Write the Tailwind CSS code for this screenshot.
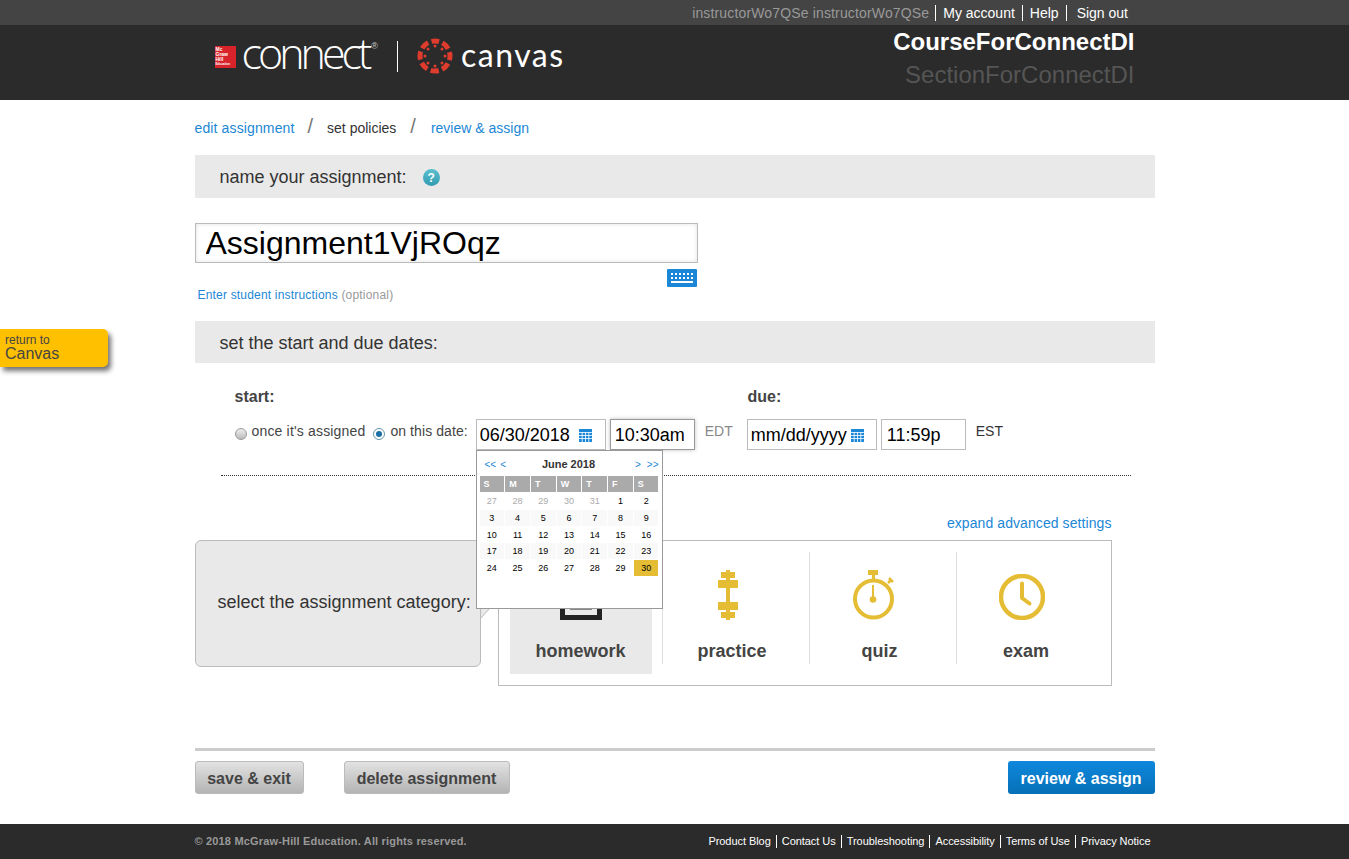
<!doctype html>
<html lang="en">
<head>
    <meta charset="UTF-8">
    <title>set policies</title>
    <script src="https://cdn.jsdelivr.net/npm/@tailwindcss/browser@4"></script>
</head>
<body class="relative h-[859px] overflow-hidden bg-white font-['Liberation_Sans',Arial,sans-serif] text-[#333]">

<!-- top bar -->
<div class="h-[25px] bg-[#444] flex justify-end items-center pr-[221px] text-[14px]">
    <span class="text-[#999] pr-[6px] border-r border-white leading-[16px] tracking-[0.15px]">instructorWo7QSe instructorWo7QSe</span>
    <a class="text-white px-[7px] border-r border-white leading-[16px]">My account</a>
    <a class="text-white px-[7px] border-r border-white leading-[16px]">Help</a>
    <a class="text-white pl-[10px] leading-[16px]">Sign out</a>
</div>

<!-- header -->
<div class="h-[75px] bg-[#2b2b2b]">
    <div class="w-[960px] mx-auto flex justify-between">
        <div class="flex items-center pl-[20px] h-[62px]">
            <div class="w-[21px] h-[22px] mt-[2px] bg-[#d8232a] text-white text-[5px] leading-[5px] font-bold pl-[1px] pt-[1px]">Mc<br>Graw<br>Hill<br><span class="block text-[3px] leading-[4px]">Education</span></div>
            <span class="ml-[6px] -mt-[7px] text-white text-[43px] leading-none font-['Open_Sans',sans-serif] font-light tracking-[-4px]">connect</span>
            <span class="text-[#ccc] text-[9px] self-start mt-[15px] ml-[3px]">®</span>
            <div class="w-px h-[31px] bg-white ml-[19px]"></div>
            <svg class="ml-[19px] w-[36px] h-[36px]" viewBox="0 0 36 36">
                <circle cx="18" cy="18" r="15" fill="none" stroke="#e03c2e" stroke-width="5" stroke-dasharray="8.2 3.58" stroke-dashoffset="4.1" transform="rotate(-90 18 18)"/>
                <g fill="#e03c2e">
                    <circle cx="18" cy="8" r="1.500"/><circle cx="18" cy="28" r="1.500"/><circle cx="8" cy="18" r="1.500"/><circle cx="28" cy="18" r="1.500"/>
                    <circle cx="11" cy="11" r="1.500"/><circle cx="25" cy="11" r="1.500"/><circle cx="11" cy="25" r="1.500"/><circle cx="25" cy="25" r="1.500"/>
                </g>
            </svg>
            <span class="ml-[8px] -mt-[3px] text-white text-[32px] leading-none font-['Lato',sans-serif] tracking-[1.500px]">canvas</span>
        </div>
        <div class="text-right pr-[20px] pt-[3px]">
            <div class="text-white text-[24px] font-bold leading-[27px]">CourseForConnectDI</div>
            <div class="text-[#555] text-[24px] leading-[27px] mt-[6px]">SectionForConnectDI</div>
        </div>
    </div>
</div>

<main class="w-[960px] mx-auto relative">
    <!-- steps -->
    <div class="h-[55px] flex items-center text-[14px] pt-[1px]">
        <a class="text-[#1b87d6] tracking-[0.13px]">edit assignment</a>
        <span class="text-[#777] text-[20px] ml-[13px] mr-[14px] -mt-[5px]">/</span>
        <span>set policies</span>
        <span class="text-[#777] text-[20px] ml-[14px] mr-[15px] -mt-[5px]">/</span>
        <a class="text-[#1b87d6]">review &amp; assign</a>
    </div>

    <!-- name -->
    <div class="h-[43px] bg-[#e9e9e9] flex items-center pl-[25px] pt-[2px] text-[18px] text-[#333]">
        name your assignment:
        <span class="ml-[16px] w-[17px] h-[17px] rounded-full bg-gradient-to-b from-[#5cc0d0] to-[#2f9bb0] text-white text-[12px] font-bold flex items-center justify-center">?</span>
    </div>
    <input value="Assignment1VjROqz" class="block mt-[25px] w-[503px] h-[40px] border border-[#bbb] px-[10px] text-[32px] text-black shadow-[inset_0_0_4px_rgba(0,0,0,0.12)]">
    <div class="w-[503px] flex justify-end pr-[1px] mt-[6px]">
        <div class="w-[30px] h-[18px] bg-[#1b87d6] rounded-[1px] flex items-center justify-center">
            <svg class="w-[24px] h-[12px]" viewBox="0 0 24 12" fill="#fff">
                <path d="M1 1h2v2H1zM5 1h2v2H5zM9 1h2v2H9zM13 1h2v2h-2zM17 1h2v2h-2zM21 1h2v2h-2zM1 5h2v2H1zM5 5h2v2H5zM9 5h2v2H9zM13 5h2v2h-2zM17 5h2v2h-2zM21 5h2v2h-2zM1 9h22v2H1z"/>
            </svg>
        </div>
    </div>
    <div class="mt-[1px] pl-[3px] text-[12px] leading-[14px] tracking-[0.19px]"><a class="text-[#1b87d6]">Enter student instructions</a> <span class="text-[#999]">(optional)</span></div>

    <!-- dates -->
    <div class="mt-[19px] h-[42px] bg-[#e9e9e9] flex items-center pl-[25px] pt-[2px] text-[18px]">set the start and due dates:</div>
    <div class="relative ml-[26px] mr-[24px] h-[113px] border-b border-dotted border-[#333] pl-[14px]">
        <div class="flex pt-[25px] text-[16px] font-bold leading-[18px] text-[#444]">
            <span class="w-[513px]">start:</span>
            <span>due:</span>
        </div>
        <div class="flex items-start mt-[13px] text-[14px] text-[#444]">
            <span class="mt-[9px] w-[12px] h-[12px] rounded-full border border-[#999] bg-gradient-to-b from-[#eee] to-[#bbb]"></span>
            <span class="ml-[5px] mt-[2px] tracking-[0.17px]">once it's assigned</span>
            <span class="ml-[8px] mt-[9px] w-[12px] h-[12px] rounded-full border border-[#69a] bg-white flex items-center justify-center"><span class="w-[6px] h-[6px] rounded-full bg-[#1a6fa8]"></span></span>
            <span class="ml-[5px] mt-[2px] tracking-[0.08px]">on this date:</span>
            <div class="ml-[8px] w-[130px] h-[31px] border border-[#bbb] flex items-center justify-between pl-[3px] pr-[13px] pt-[2px] text-[18px] text-black">
                06/30/2018
                <svg class="w-[13px] h-[13px] -mt-[1px]" viewBox="0 0 13 13"><rect width="13" height="13" fill="#1b87d6"/><path d="M0 3.5h13M0 6.5h13M0 9.5h13M3.2 3v10M6.5 3v10M9.8 3v10" stroke="#fff" stroke-width=".8"/></svg>
            </div>
            <div class="ml-[4px] w-[85px] h-[31px] border border-[#999] shadow-[0_0_4px_rgba(0,0,0,0.25)] flex items-center pl-[4px] pt-[2px] text-[18px] text-black">10:30am</div>
            <span class="ml-[10px] mt-[2px] text-[#888]">EDT</span>
            <div class="ml-[14px] w-[130px] h-[31px] border border-[#bbb] flex items-center justify-between pl-[3px] pr-[12px] pt-[2px] text-[18px] text-black">
                mm/dd/yyyy
                <svg class="w-[13px] h-[13px] shrink-0 -mt-[1px]" viewBox="0 0 13 13"><rect width="13" height="13" fill="#1b87d6"/><path d="M0 3.5h13M0 6.5h13M0 9.5h13M3.2 3v10M6.5 3v10M9.8 3v10" stroke="#fff" stroke-width=".8"/></svg>
            </div>
            <div class="ml-[4px] w-[85px] h-[31px] border border-[#bbb] flex items-center pl-[5px] pt-[2px] text-[18px] text-black">11:59p</div>
            <span class="ml-[10px] mt-[2px] text-[#333]">EST</span>
        </div>
    </div>

    <div class="w-[917px] text-right mt-[39px] text-[14px] leading-[16px] tracking-[0.08px] text-[#1b87d6]">expand advanced settings</div>

    <!-- category -->
    <div class="flex items-start mt-[9px]">
        <div class="relative w-[286px] h-[127px] bg-[#e9e9e9] border border-[#bbb] rounded-[6px] flex items-center pl-[22px] pb-[2px] text-[18px]">
            select the assignment category:
            <svg class="absolute left-[284px] top-[55px] w-[20px] h-[24px]" viewBox="0 0 20 24"><path d="M1 22 L18 3 L1 3 Z" fill="#e9e9e9"/><path d="M1 22 L18 3" stroke="#bbb" fill="none"/></svg>
        </div>
        <div class="ml-[17px] w-[614px] h-[146px] border border-[#bbb] flex pt-[11px] text-[18px] font-bold text-[#444]">
            <div class="w-[164px] h-[112px] border-r border-[#ddd] pl-[11px]">
                <div class="w-[142px] h-[122px] bg-[#e9e9e9] flex flex-col items-center">
                    <svg class="w-[42px] h-[50px] mt-[18px] shrink-0" viewBox="0 0 42 50"><path d="M2.5 2h37v45.500h-37z" fill="none" stroke="#222" stroke-width="5"/><path d="M10 38.500h22" stroke="#222" stroke-width="2"/></svg>
                    <span class="mt-[18px]">homework</span>
                </div>
            </div>
            <div class="w-[147px] h-[112px] border-r border-[#ddd] flex flex-col items-center">
                <svg class="w-[20px] h-[50px] mt-[18px] mr-[16px] shrink-0" viewBox="0 0 20 50" fill="#e5bd35">
                    <path d="M8 0h4v2h5v6h-5v2h8v8h-8v14h8v8h-8v2h5v6h-5v2H8v-2H3v-6h5v-2H0v-8h8V18H0v-8h8V8H3V2h5z"/>
                </svg>
                <span class="mt-[18px] mr-[7px]">practice</span>
            </div>
            <div class="w-[147px] h-[112px] border-r border-[#ddd] flex flex-col items-center">
                <svg class="w-[42px] h-[50px] mt-[18px] mr-[18px] shrink-0" viewBox="0 0 42 50" fill="none" stroke="#e5bd35">
                    <path d="M15 2.500h10" stroke-width="5"/><path d="M20.500 4v5" stroke-width="3"/>
                    <circle cx="20.500" cy="29" r="18.500" stroke-width="4"/>
                    <path d="M20 15v13" stroke-width="2"/><circle cx="20" cy="29.500" r="3.300" fill="#e5bd35" stroke="none"/>
                    <path d="M35 13l3-3M36 8l4 4" stroke-width="2.500"/>
                </svg>
                <span class="mt-[18px] mr-[6px]">quiz</span>
            </div>
            <div class="w-[147px] h-[112px] flex flex-col items-center">
                <svg class="w-[46px] h-[46px] mt-[22px] mr-[17px] shrink-0" viewBox="0 0 46 46" fill="none" stroke="#e5bd35">
                    <circle cx="23" cy="23" r="21" stroke-width="4.500"/>
                    <path d="M23 9.500V24l7.500 5.500" stroke-width="4" stroke-linecap="round" stroke-linejoin="round"/>
                </svg>
                <span class="mt-[18px] mr-[8px]">exam</span>
            </div>
        </div>
    </div>

    <!-- date picker -->
    <div class="absolute left-[281px] top-[350px] z-10 w-[187px] h-[159px] bg-white border border-[#999] px-[3px] text-[9px] text-black">
        <div class="flex items-center justify-between h-[25px] pl-[5px] pt-[2px] text-[10px] text-[#1b87d6]">
            <span class="flex gap-[4px]"><span>&lt;&lt;</span><span>&lt;</span></span>
            <span class="mr-[4px] text-[11px] font-bold text-[#333]">June 2018</span>
            <span class="flex gap-[6px]"><span>&gt;</span><span>&gt;&gt;</span></span>
        </div>
        <div class="grid grid-cols-7 gap-x-[1px] h-[16px] bg-white *:bg-[#aaa] *:text-white *:font-bold *:pl-[4px] *:leading-[16px]">
            <span>S</span><span>M</span><span>T</span><span>W</span><span>T</span><span>F</span><span>S</span>
        </div>
        <div class="mt-[1px] grid grid-cols-7 gap-x-[1px] gap-y-[0.75px] auto-rows-[16px] text-center leading-[16px]">
            <span class="text-[#aaa]">27</span><span class="text-[#aaa]">28</span><span class="text-[#aaa]">29</span><span class="text-[#aaa]">30</span><span class="text-[#aaa]">31</span><span>1</span><span>2</span>
            <span class="bg-[#f9f9f9]">3</span><span class="bg-[#f9f9f9]">4</span><span class="bg-[#f9f9f9]">5</span><span class="bg-[#f9f9f9]">6</span><span class="bg-[#f9f9f9]">7</span><span class="bg-[#f9f9f9]">8</span><span class="bg-[#f9f9f9]">9</span>
            <span>10</span><span>11</span><span>12</span><span>13</span><span>14</span><span>15</span><span>16</span>
            <span class="bg-[#f9f9f9]">17</span><span class="bg-[#f9f9f9]">18</span><span class="bg-[#f9f9f9]">19</span><span class="bg-[#f9f9f9]">20</span><span class="bg-[#f9f9f9]">21</span><span class="bg-[#f9f9f9]">22</span><span class="bg-[#f9f9f9]">23</span>
            <span>24</span><span>25</span><span>26</span><span>27</span><span>28</span><span>29</span><span class="bg-[#e5bd35]">30</span>
        </div>
    </div>

    <!-- actions -->
    <div class="mt-[62px] border-t-[3px] border-[#ccc] pt-[10px] flex text-[16px] font-bold">
        <a class="w-[109px] h-[33px] pt-[2px] rounded-[3px] border border-[#bbb] bg-gradient-to-b from-[#e2e2e2] to-[#b4b4b4] text-[#444] flex items-center justify-center">save &amp; exit</a>
        <a class="ml-[40px] w-[166px] h-[33px] pt-[2px] rounded-[3px] border border-[#bbb] bg-gradient-to-b from-[#e2e2e2] to-[#b4b4b4] text-[#444] flex items-center justify-center">delete assignment</a>
        <a class="ml-auto w-[147px] h-[33px] pt-[2px] rounded-[3px] bg-gradient-to-b from-[#0f88dc] to-[#0670b8] text-white flex items-center justify-center">review &amp; assign</a>
    </div>
</main>

<!-- return tab -->
<a class="absolute left-0 top-[329px] w-[108px] h-[38px] bg-[#ffc000] rounded-r-[5px] shadow-[3px_4px_5px_rgba(0,0,0,0.55)] pl-[5px] pt-[5px] text-[#444]">
    <span class="block text-[12px] leading-[13px]">return to</span>
    <span class="block text-[16px] leading-[14px]">Canvas</span>
</a>

<!-- footer -->
<footer class="absolute left-0 right-0 bottom-0 h-[35px] bg-[#2b2b2b]">
    <div class="w-[960px] h-full mx-auto flex items-center justify-between">
        <span class="text-[#999] font-bold text-[11px] tracking-[0.17px]">© 2018 McGraw-Hill Education. All rights reserved.</span>
        <div class="flex text-white text-[11px] tracking-[-0.05px] leading-[13px] pr-[4px]">
            <a class="pr-[5px] border-r border-white">Product Blog</a>
            <a class="px-[5px] border-r border-white">Contact Us</a>
            <a class="px-[5px] border-r border-white">Troubleshooting</a>
            <a class="px-[5px] border-r border-white">Accessibility</a>
            <a class="px-[5px] border-r border-white">Terms of Use</a>
            <a class="pl-[5px]">Privacy Notice</a>
        </div>
    </div>
</footer>

</body>
</html>
